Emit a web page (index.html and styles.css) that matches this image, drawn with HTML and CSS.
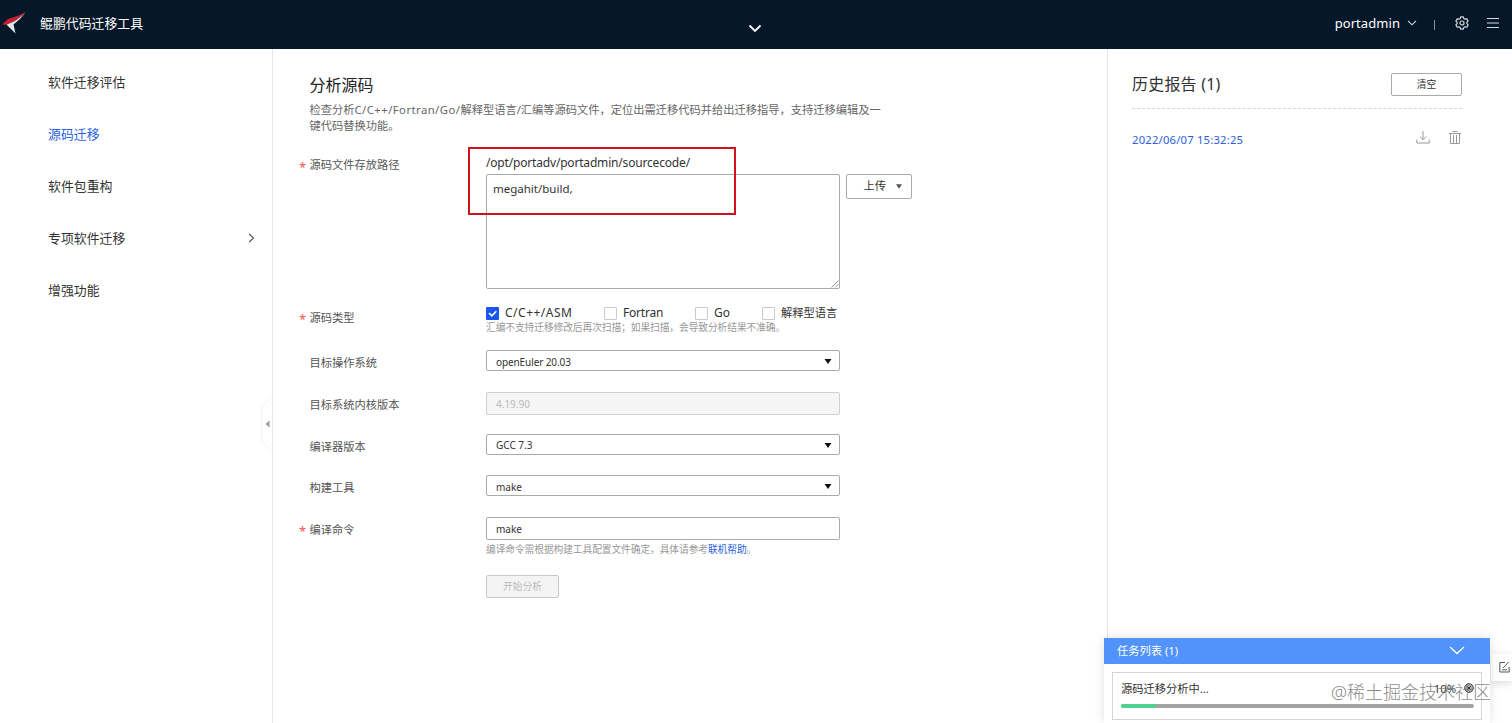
FILE: index.html
```html
<!DOCTYPE html>
<html lang="zh-CN">
<head>
<meta charset="utf-8">
<title>鲲鹏代码迁移工具</title>
<link rel="stylesheet" href="styles.css">
</head>
<body>
<div class="app">
  <header class="topbar">
    <svg class="logo" width="28" height="24" viewBox="0 0 28 24"><path d="M2 13.500 L8 8 Q17 6 25.500 1 Q20 8 7 13.700 Z" fill="#c9202e"/><path d="M6.500 13.800 Q18 9.500 25.500 1.500 Q20 9 13.500 13.500 L15.500 22.500 L10.500 17.500 Z" fill="#e3e6ea"/></svg>
    <span class="brand">鲲鹏代码迁移工具</span>
    <svg class="drop" width="14" height="9" viewBox="0 0 14 9"><path d="M1.500 1.500 L7 7 L12.500 1.500" fill="none" stroke="#fff" stroke-width="1.800"/></svg>
    <span class="user">portadmin</span>
    <svg class="user-arrow" width="10" height="6" viewBox="0 0 10 6"><path d="M1 .8 L5 4.800 L9 .8" fill="none" stroke="#d5dae0" stroke-width="1.100"/></svg>
    <i class="bar"></i>
    <svg class="gear" width="14" height="14" viewBox="0 0 14 14" fill="none" stroke="#d5dae0" stroke-width="1.200" stroke-linejoin="round"><path d="M5.700 .8 H8.300 L8.800 2.500 L10.100 3.200 L11.800 2.800 L13.100 5 L11.900 6.300 V7.700 L13.100 9 L11.800 11.200 L10.100 10.800 L8.800 11.500 L8.300 13.200 H5.700 L5.200 11.500 L3.900 10.800 L2.200 11.200 L.9 9 L2.100 7.700 V6.300 L.9 5 L2.200 2.800 L3.900 3.200 L5.200 2.500 Z"/><circle cx="7" cy="7" r="2"/></svg>
    <svg class="menu" width="12" height="12" viewBox="0 0 12 12"><path d="M0 1.500 H12 M0 6 H12 M0 10.500 H12" stroke="#d5dae0" stroke-width="1.100"/></svg>
  </header>
  <div class="body">
    <nav class="side">
      <a class="nav">软件迁移评估</a>
      <a class="nav active">源码迁移</a>
      <a class="nav">软件包重构</a>
      <a class="nav">专项软件迁移<svg width="7" height="10" viewBox="0 0 7 10"><path d="M1.200 1 L5.500 5 L1.200 9" fill="none" stroke="#555" stroke-width="1.100"/></svg></a>
      <a class="nav">增强功能</a>
      <svg class="collapse" width="11" height="58" viewBox="0 0 11 58"><path d="M10.500 1 L.5 12 V46 L10.500 57" fill="#fff" stroke="#f2f2f2"/><path d="M4.500 29 L8.500 25.500 V32.500 Z" fill="#999"/></svg>
    </nav>
    <main class="main">
      <h1 class="title">分析源码</h1>
      <p class="desc">检查分析<span class="langs">C/C++/Fortran/Go/</span>解释型语言/汇编等源码文件，定位出需迁移代码并给出迁移指导，支持迁移编辑及一<br>键代码替换功能。</p>
      <div class="row path-row">
        <label class="label"><b>*</b>源码文件存放路径</label>
        <div class="field">
          <div class="path">/opt/portadv/portadmin/sourcecode/</div>
          <div class="area">megahit/build,<svg class="grip" width="8" height="8" viewBox="0 0 8 8"><path d="M.5 7.500 L7.500 .5 M4 7.500 L7.500 4" stroke="#777" stroke-width=".8"/></svg></div>
        </div>
        <div class="upload"><span>上传</span><svg width="6" height="5" viewBox="0 0 6 5"><path d="M0 .3 H6 L3 4.700 Z" fill="#555"/></svg></div>
        <div class="highlight"></div>
      </div>
      <div class="row type-row">
        <label class="label"><b>*</b>源码类型</label>
        <div class="field">
          <div class="checks">
            <span class="check c1"><svg width="13" height="13" viewBox="0 0 13 13"><rect width="13" height="13" rx="1" fill="#1a56ee"/><path d="M3 6 L5.800 8.800 L10.300 4.300" fill="none" stroke="#fff" stroke-width="1.600"/></svg><em>C/C++/ASM</em></span>
            <span class="check c2"><i></i><em>Fortran</em></span>
            <span class="check c3"><i></i><em>Go</em></span>
            <span class="check c4"><i></i><em>解释型语言</em></span>
          </div>
          <div class="note type">汇编不支持迁移修改后再次扫描；如果扫描，会导致分析结果不准确。</div>
        </div>
      </div>
      <div class="row">
        <label class="label">目标操作系统</label>
        <div class="select"><span class="os">openEuler 20.03</span><svg width="8" height="5" viewBox="0 0 8 5"><path d="M.5 0 H7.500 L4 5 Z" fill="#111"/></svg></div>
      </div>
      <div class="row">
        <label class="label">目标系统内核版本</label>
        <div class="input disabled">4.19.90</div>
      </div>
      <div class="row">
        <label class="label">编译器版本</label>
        <div class="select"><span>GCC 7.3</span><svg width="8" height="5" viewBox="0 0 8 5"><path d="M.5 0 H7.500 L4 5 Z" fill="#111"/></svg></div>
      </div>
      <div class="row">
        <label class="label">构建工具</label>
        <div class="select"><span>make</span><svg width="8" height="5" viewBox="0 0 8 5"><path d="M.5 0 H7.500 L4 5 Z" fill="#111"/></svg></div>
      </div>
      <div class="row last">
        <label class="label"><b>*</b>编译命令</label>
        <div class="field">
          <div class="input">make</div>
          <div class="note cmd">编译命令需根据构建工具配置文件确定，具体请参考<a>联机帮助</a>。</div>
        </div>
      </div>
      <div class="start">开始分析</div>
    </main>
    <aside class="history">
      <div class="hist-head"><span class="hist-title">历史报告 (1)</span><span class="clear">清空</span></div>
      <div class="hist-item">
        <span class="date">2022/06/07 15:32:25</span>
        <svg width="14" height="13" viewBox="0 0 14 13" fill="none" stroke="#999" stroke-width="1"><path d="M7 0 V8.500 M3.800 5.500 L7 8.700 L10.200 5.500 M.8 8.500 V12 H13.200 V8.500"/></svg>
        <svg width="12" height="13" viewBox="0 0 12 13" fill="none" stroke="#999" stroke-width="1"><path d="M0 2.500 H12 M3.500 .5 H8.500 M1.500 2.500 V12.500 H10.500 V2.500 M4.500 4 V12 M7.500 4 V12"/></svg>
      </div>
    </aside>
  </div>
  <div class="feedback"><svg width="11" height="12" viewBox="0 0 11 12" fill="none" stroke="#555" stroke-width="1"><path d="M6 1.500 H.8 V11 H10.200 V6 M4 7 L9.800 .8 M3 8.800 H8"/></svg></div>
  <section class="tasks">
    <div class="task-head"><span>任务列表 (1)</span><svg width="16" height="9" viewBox="0 0 16 9"><path d="M1 1 L8 7.500 L15 1" fill="none" stroke="#fff" stroke-width="1.300"/></svg></div>
    <div class="task">
      <div class="task-line"><span class="task-name">源码迁移分析中...</span><span class="pct">10%</span><svg width="10" height="10" viewBox="0 0 10 10"><circle cx="5" cy="5" r="4.300" fill="#aaa" stroke="#444"/><path d="M3.300 3.300 L6.700 6.700 M6.700 3.300 L3.300 6.700" stroke="#333"/></svg></div>
      <div class="progress"><i></i></div>
    </div>
  </section>
  <div class="watermark">@稀土掘金技术社区</div>
</div>
</body>
</html>
```

FILE: styles.css
```css
* { box-sizing: border-box; }
body { margin: 0; background: #fff; color: #333; font-family: "Noto Sans", "Noto Sans CJK SC", sans-serif; }
svg { display: block; flex: none; }
.app { position: relative; width: 1512px; height: 723px; overflow: hidden; display: flex; flex-direction: column; white-space: nowrap; }
.topbar { height: 49px; background: #051728; display: flex; align-items: center; color: #fff; flex: none; padding: 0 13px 3px 0; }
.logo { margin-right: 12px; }
.brand { font-size: 12.900px; width: 104px; line-height: 20px; }
.drop { margin: 11px 0 0 604px; }
.user { margin-left: auto; font-size: 13px; line-height: 20px; margin-right: 7px; letter-spacing: .06px; }
.user-arrow { margin-right: 17px; }
.bar { width: 1px; height: 10px; background: #8d969f; margin: 3px 20px 0 0; }
.gear { margin-right: 18px; }
.body { flex: 1; display: flex; }
.side { position: relative; width: 273px; border-right: 1px solid #e6e6e6; padding: 6px 17px 0 48px; flex: none; }
.nav { display: flex; align-items: center; justify-content: space-between; height: 52.200px; font-size: 12.900px; color: #333; }
.active { color: #2b5fe3; }
.collapse { position: absolute; right: 0; top: 346px; }
.main { width: 834px; padding: 24px 0 0 36px; flex: none; }
.title { margin: 0 0 0 .5px; font-weight: 400; font-size: 16px; line-height: 24px; color: #222; }
.desc { margin: 5px 0 0 .5px; font-size: 11.250px; line-height: 15.500px; color: #666; }
.langs { letter-spacing: .47px; }
.row { display: flex; height: 41.750px; align-items: flex-start; position: relative; }
.label { width: 177px; padding-left: .5px; font-size: 11.250px; line-height: 25px; color: #555; position: relative; flex: none; }
.label b { position: absolute; left: -10px; top: 2px; color: #f25555; font-weight: 400; font-size: 13px; }
.path-row { margin-top: 19px; height: 150px; }
.path-row .label { line-height: 26px; }
.path { font-size: 12px; line-height: 22px; height: 22px; color: #333; letter-spacing: -.18px; }
.area { position: relative; width: 354px; height: 115px; border: 1px solid #aaa; border-radius: 2px; padding: 5px 6px; font-size: 11.500px; line-height: 17px; }
.grip { position: absolute; right: 0; bottom: 0; }
.upload { margin: 22px 0 0 6px; width: 66px; height: 25px; border: 1px solid #aaa; border-radius: 2px; display: flex; align-items: center; justify-content: flex-end; gap: 10px; padding-right: 9px; font-size: 11.250px; line-height: 18px; }
.upload span { margin-top: -2px; }
.highlight { position: absolute; left: 159px; top: -5px; width: 268px; height: 68px; border: 2px solid #d0121f; }
.type-row { height: 48px; }
.type-row .label { line-height: 31px; }
.checks { height: 21px; display: grid; grid-template-columns: 118px 91px 67px 80px; align-items: center; padding-top: 1px; }
.check { display: flex; align-items: center; gap: 6px; font-size: 12px; }
.check em { font-style: normal; line-height: 16px; }
.check i { width: 13px; height: 13px; border: 1px solid #c9c9c9; border-radius: 1px; }
.c1 em { letter-spacing: .5px; }
.c2 em { letter-spacing: -.2px; }
.c4 em { font-size: 11.250px; }
.note { font-size: 9.750px; line-height: 12px; color: #999; }
.type { letter-spacing: -.1px; margin-top: -1px; }
.select { width: 354px; height: 21px; border: 1px solid #aaa; border-radius: 2px; display: flex; align-items: center; justify-content: space-between; padding: 2px 7px 0 9px; font-size: 10px; }
.os { letter-spacing: -.1px; }
.input { width: 354px; height: 23px; border: 1px solid #aaa; border-radius: 2px; padding: 1px 9px 0; font-size: 10px; line-height: 21px; }
.disabled { background: #f5f5f5; border-color: #d0d0d0; color: #bbb; }
.last { height: 58px; }
.cmd { margin-top: 4px; letter-spacing: -.1px; }
.cmd a { color: #2b5fe3; }
.start { margin-left: 177px; width: 73px; height: 23px; border: 1px solid #c8c8c8; border-radius: 2px; background: #f4f4f4; color: #bbb; font-size: 9.750px; line-height: 21px; text-align: center; }
.history { flex: 1; border-left: 1px solid #e6e6e6; padding: 11px 50px 0 24px; }
.hist-head { height: 49px; border-bottom: 1px dashed #d6d6d6; display: flex; align-items: center; justify-content: space-between; }
.hist-title { font-size: 16px; color: #333; letter-spacing: .2px; margin-top: -2px; }
.clear { width: 71px; height: 23px; border: 1px solid #aaa; border-radius: 2px; font-size: 9.750px; line-height: 21px; text-align: center; }
.hist-item { display: flex; align-items: center; height: 60px; font-size: 11.250px; }
.date { color: #2b5fe3; margin-right: auto; letter-spacing: .2px; }
.hist-item svg { position: relative; left: -1px; margin-left: 19px; margin-top: -3px; }
.tasks { position: absolute; left: 1104px; top: 638px; width: 386px; height: 85px; background: #fff; box-shadow: 0 0 10px rgba(0,0,0,.12); }
.task-head { height: 26px; background: #5193fb; color: #fff; font-size: 11.250px; display: flex; align-items: center; justify-content: space-between; padding: 0 25px 2px 13px; }
.task { margin: 8px 8px 0; height: 48px; border: 1px solid #d6d6d6; padding: 6px 7px 0 8px; }
.task-line { display: flex; align-items: center; height: 18px; font-size: 11.250px; }
.task-name { margin-right: auto; }
.pct { margin-right: 8px; font-size: 11.250px; }
.progress { height: 4px; margin-top: 7px; background: #a3a3a3; border-radius: 2px; overflow: hidden; }
.progress i { display: block; width: 10%; height: 4px; background: #4fd18f; }
.feedback { position: absolute; right: 0; top: 654px; width: 21px; height: 27px; background: #fff; box-shadow: 0 2px 8px rgba(0,0,0,.15); padding: 7px 0 0 8px; }
.watermark { position: absolute; left: 1331px; top: 680px; font-size: 18px; line-height: 24px; color: #777; font-weight: 300; opacity: .85; }
```
